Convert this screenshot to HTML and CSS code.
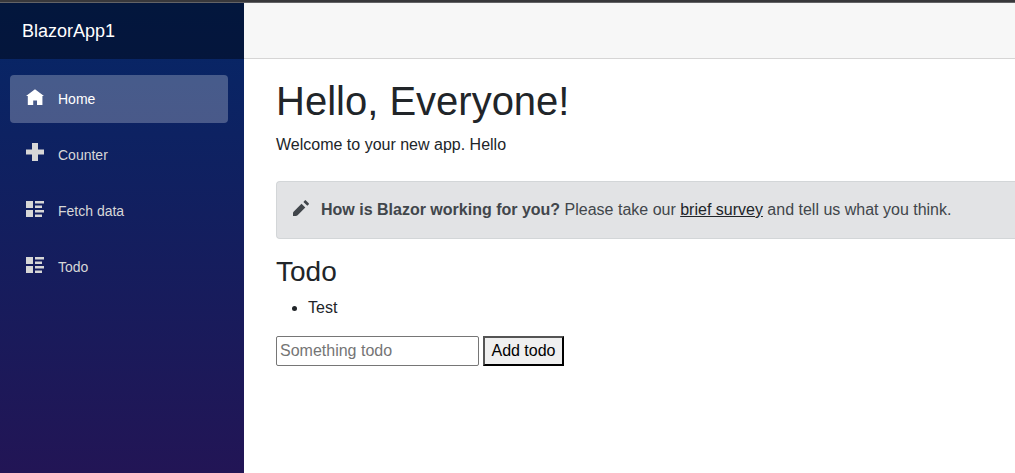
FILE: index.html
```html
<!DOCTYPE html>
<html lang="en">
<head>
    <meta charset="UTF-8">
    <meta name="viewport" content="width=device-width, initial-scale=1.0">
    <title>BlazorApp1</title>
    <link rel="stylesheet" href="styles.css">
</head>
<body>
    <div class="window-edge"></div>
    <div class="page">
        <div class="sidebar">
            <div class="brand-row">
                <a class="brand" href="#">BlazorApp1</a>
            </div>
            <nav class="nav">
                <a class="nav-link active" href="#">
                    <svg class="icon" viewBox="0 -1 8 8" aria-hidden="true"><path d="M4 0l-4 3h.8v4h2.4v-2h1.7v2h2.4v-4h.7l-4-3z"/></svg>
                    Home
                </a>
                <a class="nav-link" href="#counter">
                    <svg class="icon" viewBox="0 0 18 18" aria-hidden="true"><path d="M6 0v6.5h-6v5h6v6.5h6v-6.5h6v-5h-6v-6.5z"/></svg>
                    Counter
                </a>
                <a class="nav-link" href="#fetchdata">
                    <svg class="icon" viewBox="0 0 18 18" aria-hidden="true"><path d="M0 2h7v7h-7zM9 2h9v2.6h-9zM9 6.6h7v2.4h-7zM0 11h7v7h-7zM9 11h9v2.6h-9zM9 15.6h7v2.4h-7z"/></svg>
                    Fetch data
                </a>
                <a class="nav-link" href="#todo">
                    <svg class="icon" viewBox="0 0 18 18" aria-hidden="true"><path d="M0 2h7v7h-7zM9 2h9v2.6h-9zM9 6.6h7v2.4h-7zM0 11h7v7h-7zM9 11h9v2.6h-9zM9 15.6h7v2.4h-7z"/></svg>
                    Todo
                </a>
            </nav>
        </div>

        <main class="main">
            <div class="top-row"></div>
            <div class="content">
                <h1>Hello, Everyone!</h1>
                <p>Welcome to your new app. Hello</p>

                <div class="alert">
                    <svg class="pencil" viewBox="0 0 16 16" aria-hidden="true"><path d="M12 .3l-1.6 1.6 3.9 3.9 1.6-1.6q.2-.5-.2-.9l-2.8-2.9q-.5-.5-.9-.1zM8.5 3.8l-7.7 7.6q-.8.8-.8 1.8v2.8h2.8q1 0 1.8-.8l7.7-7.6z"/></svg>
                    <div>
                        <strong>How is Blazor working for you?</strong>
                        Please take our <a href="#survey">brief survey</a> and tell us what you think.
                    </div>
                </div>

                <h3 id="todo">Todo</h3>
                <ul>
                    <li>Test</li>
                </ul>
                <input class="todo-input" type="text" placeholder="Something todo" aria-label="Something todo">
                <button class="todo-btn" type="button">Add todo</button>
            </div>
        </main>
    </div>
</body>
</html>
```

FILE: styles.css
```css
* {
    box-sizing: border-box;
}

body {
    display: flex;
    flex-direction: column;
    min-height: 100vh;
    margin: 0;
    font-family: "Liberation Sans", Arial, sans-serif;
    font-size: 16px;
    line-height: 24px;
    color: #212529;
    background-color: #fff;
}

.window-edge {
    height: 3px;
    background-color: #38383b;
    border-bottom: 1px solid #636366;
}

.page {
    display: flex;
    flex: 1;
}

.sidebar {
    width: 244px;
    flex-shrink: 0;
    background-image: linear-gradient(180deg, rgb(5, 39, 103) 0%, #3a0647 182%);
}

.brand-row {
    display: flex;
    align-items: center;
    height: 56px;
    padding-left: 22px;
    background-color: rgba(0, 0, 0, 0.4);
}

.brand {
    font-size: 18px;
    color: #fff;
    text-decoration: none;
}

.nav {
    display: flex;
    flex-direction: column;
    gap: 8px;
    padding: 16px 16px 16px 10px;
}

.nav-link {
    display: flex;
    align-items: center;
    gap: 14px;
    height: 48px;
    padding: 0 16px;
    border-radius: 4px;
    font-size: 14px;
    color: #d7d7d7;
    text-decoration: none;
}

.nav-link.active,
.nav-link:hover {
    background-color: rgba(255, 255, 255, 0.25);
    color: #fff;
}

.icon {
    width: 18px;
    height: 18px;
    margin-bottom: 6px;
    fill: currentColor;
}

.main {
    flex: 1;
    min-width: 0;
}

.top-row {
    height: 56px;
    background-color: #f7f7f7;
    border-bottom: 1px solid #d6d5d5;
}

.content {
    padding: 18px 0 18px 32px;
}

h1, h3 {
    margin: 0 0 8px;
    font-weight: 400;
}

h1 {
    font-size: 40px;
    line-height: 48px;
}

h3 {
    font-size: 28px;
    line-height: 33px;
}

p {
    margin: 0;
}

.alert {
    display: flex;
    align-items: center;
    gap: 12px;
    margin: 24px 0 16px;
    padding: 16px;
    background-color: #e2e3e5;
    border: 1px solid #d3d6d8;
    border-right: none;
    border-radius: 4px 0 0 4px;
    color: #41464b;
}

.alert a {
    color: #212529;
}

.pencil {
    width: 16px;
    height: 16px;
    margin-bottom: 4px;
    flex-shrink: 0;
    fill: currentColor;
}

ul {
    margin: 0 0 16px;
    padding-left: 32px;
}

.todo-input,
.todo-btn {
    height: 30px;
    font-family: inherit;
    font-size: 16px;
    line-height: 24px;
}

.todo-input {
    width: 203px;
    padding: 1px 3px;
    border: 1px solid #767676;
    border-radius: 2px;
}

.todo-input::placeholder {
    color: #757575;
}

.todo-btn {
    padding: 1px 6px;
    border: 2px outset #000;
    border-radius: 0;
    background-color: #efefef;
    color: #000;
}
```
